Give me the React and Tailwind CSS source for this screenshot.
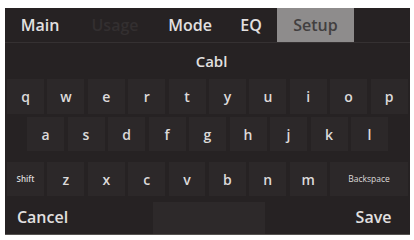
import React from "react";

const row1 = ["q","w","e","r","t","y","u","i","o","p"];
const row2 = ["a","s","d","f","g","h","j","k","l"];
const row3 = ["z","x","c","v","b","n","m"];

function Key({ children, className = "" }) {
  return (
    <div className={"h-full flex items-center justify-center bg-[#2c2829] text-[#dcdada] " + className}>
      {children}
    </div>
  );
}

export default function App() {
  return (
    <div className="w-[414px] h-[240px] bg-white pt-[8px] pl-[5px]" style={{ fontFamily: '"Open Sans", "DejaVu Sans", sans-serif' }}>
      <div className="w-[405px] h-[227px] bg-[#262223] flex flex-col border-b border-[#55524f]">
        {/* tabs */}
        <div className="h-[35px] flex items-stretch border-b border-[#353132] text-[16px] text-[#e2e0e0] font-semibold">
          <div className="w-[70px] flex items-center justify-center">Main</div>
          <div className="w-[80px] flex items-center justify-center text-[#332f30]">Usage</div>
          <div className="w-[70px] flex items-center justify-center">Mode</div>
          <div className="w-[52px] flex items-center justify-center">EQ</div>
          <div className="w-[77px] flex items-center justify-center bg-[#8e8c8c] text-[#423f40]">Setup</div>
        </div>
        {/* title */}
        <div className="h-[36px] flex items-center justify-center text-[15px] font-semibold text-[#e2e0e0] pl-[8px]">Cabl</div>
        {/* row 1 */}
        <div className="h-[35px] flex px-[2px] gap-[3.4px] text-[14px] font-semibold">
          {row1.map((k) => (
            <Key key={k} className="w-[37px]">{k}</Key>
          ))}
        </div>
        <div className="h-[3px]" />
        {/* row 2 */}
        <div className="h-[34px] flex pl-[22px] gap-[3.5px] text-[14px] font-semibold">
          {row2.map((k) => (
            <Key key={k} className="w-[37px]">{k}</Key>
          ))}
        </div>
        <div className="h-[11px]" />
        {/* row 3 */}
        <div className="h-[34px] flex px-[2px] gap-[3.4px] text-[14px] font-semibold">
          <Key className="w-[37px] text-[8px]">Shift</Key>
          {row3.map((k) => (
            <Key key={k} className="w-[37px]">{k}</Key>
          ))}
          <Key className="w-[78px] text-[8.5px] font-normal">Backspace</Key>
        </div>
        <div className="h-[3px]" />
        {/* bottom */}
        <div className="flex-1 flex text-[16px] font-semibold text-[#e2e0e0]">
          <div className="w-[75px] flex items-center justify-center bg-[#262223]">Cancel</div>
          <div className="w-[73px] bg-[#262223]" />
          <div className="w-[112px] bg-[#2d292a] mt-[3px]" />
          <div className="w-[72px] bg-[#262223]" />
          <div className="w-[73px] flex items-center justify-center bg-[#262223]">Save</div>
        </div>
      </div>
    </div>
  );
}
